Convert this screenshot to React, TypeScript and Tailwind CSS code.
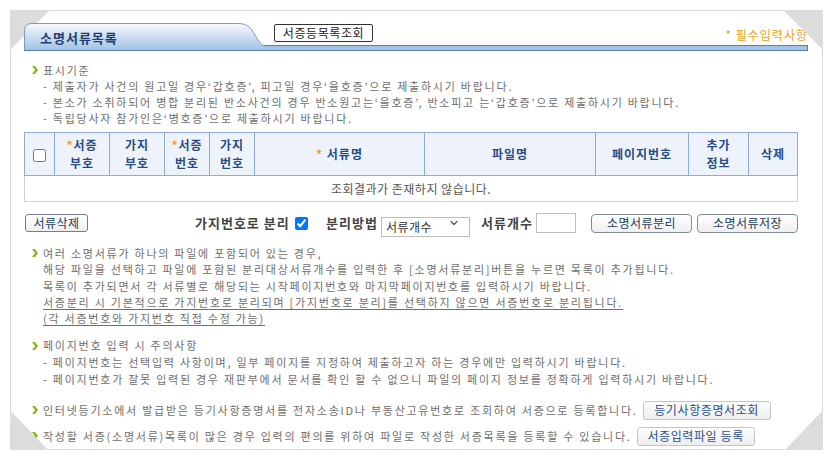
import { ChevronDown } from "lucide-react";

function Bullet() {
  return (
    <svg width="6" height="8" viewBox="0 0 6 8" className="shrink-0">
      <path d="M0 0 L3 0 L6 4 L3 8 L0 8 L3 4 Z" fill="#8bb523" />
    </svg>
  );
}

function Corner({ className, points }: { className: string; points: string }) {
  return (
    <svg width="40" height="40" viewBox="0 0 40 40" className={"absolute " + className}>
      <polygon points={points} fill="#dcdcdc" />
    </svg>
  );
}

const body = "text-[11px] tracking-[1.75px] text-[#6e6e6e]";
const label = "inline-block text-[13px] font-bold tracking-[1px] text-[#444] whitespace-nowrap";
const th = "border border-[#8eabd5] text-[12px] font-bold tracking-[1px] text-[#284b86] leading-[18px] text-center align-middle";
const star = <span className="text-[#f09a2c]">*</span>;
const navBtn = "h-[19px] border border-[#7f8c99] rounded-[4px] bg-gradient-to-b from-white to-[#efefef] text-[12px] tracking-[0.5px] leading-[16px] text-[#233a5c]";
const lightBtn = "ml-[5px] h-[19px] border border-[#c5c5c5] rounded-[3px] bg-gradient-to-b from-[#fdfdfd] to-[#eeeeee] text-[12px] tracking-[0.6px] leading-[16px] text-[#1e4f8f]";

export default function App() {
  return (
    <div className="relative w-[835px] h-[461px] bg-white font-['Noto_Sans_CJK_KR','Noto_Sans',sans-serif]">
      <div className="absolute left-[10px] top-[10px] w-[813px] h-[440px] border border-[#d9d9d9] pl-[13px] pt-[12px]">
        {/* header */}
        <div className="relative flex w-[784px] h-[28px]">
          <div className="absolute left-0 right-0 bottom-0 h-[6px] bg-[#a3c3e6] border border-[#5e80a8]" />
          <div className="relative w-[242px] h-[27px] z-10">
            <svg width="242" height="27" viewBox="0 0 242 27" className="absolute inset-0">
              <defs>
                <linearGradient id="tabg" x1="0" y1="0" x2="0" y2="1">
                  <stop offset="0" stopColor="#f6f9fd" />
                  <stop offset="1" stopColor="#a3c3e6" />
                </linearGradient>
              </defs>
              <path d="M0.5 27 V8 Q0.5 0.5 8 0.5 H214 C224 0.5 227 5 231 12 C235 19 238 23 242 23.5 V27 Z" fill="url(#tabg)" />
              <path d="M0.5 27 V8 Q0.5 0.5 8 0.5 H214 C224 0.5 227 5 231 12 C235 19 238 23 242 23.5" fill="none" stroke="#7a9bc3" />
            </svg>
            <span className="relative block pl-[16px] pt-[7px] leading-[16px] text-[13px] font-bold tracking-[1px] text-[#1f3f73]">
              소명서류목록
            </span>
          </div>
          <button className="relative z-10 ml-[8px] mt-[1px] w-[99px] h-[18px] border border-[#333] rounded-[2px] bg-white text-[12px] tracking-[0.6px] leading-[16px] text-[#222]">
            서증등목록조회
          </button>
          <span className="ml-auto mt-[4px] leading-[16px] text-[12px] tracking-[1px] text-[#e8a317]">* 필수입력사항</span>
        </div>

        {/* 표시기준 */}
        <div className={"mt-[11px] leading-[16px] " + body}>
          <div className="flex items-center">
            <span className="ml-[8px] mr-[5px]"><Bullet /></span>표시기준
          </div>
          <div className="pl-[19px]">- 제출자가 사건의 원고일 경우‘갑호증’, 피고일 경우‘을호증’으로 제출하시기 바랍니다.</div>
          <div className="pl-[19px]">- 본소가 소취하되어 병합 분리된 반소사건의 경우 반소원고는‘을호증’, 반소피고 는‘갑호증’으로 제출하시기 바랍니다.</div>
          <div className="pl-[19px]">- 독립당사자 참가인은‘병호증’으로 제출하시기 바랍니다.</div>
        </div>

        {/* table */}
        <table className="mt-[6px] w-[773px] border-collapse table-fixed">
          <colgroup>
            <col className="w-[30px]" />
            <col className="w-[55px]" />
            <col className="w-[55px]" />
            <col className="w-[45px]" />
            <col className="w-[45px]" />
            <col className="w-[170px]" />
            <col className="w-[171px]" />
            <col className="w-[93px]" />
            <col className="w-[60px]" />
            <col className="w-[49px]" />
          </colgroup>
          <thead>
            <tr className="h-[43px] bg-[#eef3fb]">
              <th className={th}>
                <input type="checkbox" className="w-[13px] h-[13px] align-middle" />
              </th>
              <th className={th}>{star}서증<br />부호</th>
              <th className={th}>가지<br />부호</th>
              <th className={th}>{star}서증<br />번호</th>
              <th className={th}>가지<br />번호</th>
              <th className={th}>{star} 서류명</th>
              <th className={th}>파일명</th>
              <th className={th}>페이지번호</th>
              <th className={th}>추가<br />정보</th>
              <th className={th}>삭제</th>
            </tr>
          </thead>
          <tbody>
            <tr className="h-[26px]">
              <td colSpan={10} className="border border-[#d3d3d3] text-center text-[12px] tracking-[0.5px] text-[#555]">
                조회결과가 존재하지 않습니다.
              </td>
            </tr>
          </tbody>
        </table>

        {/* controls */}
        <div className="mt-[11px] flex items-center h-[20px] w-[774px]">
          <button className={"ml-[1px] w-[63px] !h-[18px] !rounded-[3px] !border-[#6f7f90] " + navBtn}>서류삭제</button>
          <span className={"ml-[107px] w-[96px] " + label}>가지번호로 분리</span>
          <input type="checkbox" defaultChecked className="ml-[4px] w-[13px] h-[13px]" />
          <span className={"ml-[18px] w-[52px] " + label}>분리방법</span>
          <div className="relative ml-[3px] w-[89px] h-[20px]">
            <select className="appearance-none w-full h-full border border-[#bdbdbd] bg-white pl-[4px] text-[12px] tracking-[0.5px] text-[#333] outline-none">
              <option>서류개수</option>
            </select>
            <ChevronDown size={12} strokeWidth={2.5} className="absolute right-[10px] top-[4px] text-[#555] pointer-events-none" />
          </div>
          <span className={"ml-[11px] w-[52px] " + label}>서류개수</span>
          <input type="text" className="ml-[3px] w-[40px] h-[20px] border border-[#bdbdbd] bg-white" />
          <button className={"ml-[15px] w-[101px] " + navBtn}>소명서류분리</button>
          <button className={"ml-[5px] w-[101px] " + navBtn}>소명서류저장</button>
        </div>

        {/* 분리 안내 */}
        <div className={"mt-[12px] leading-[16.25px] " + body}>
          <div className="flex items-center">
            <span className="ml-[8px] mr-[5px]"><Bullet /></span>여러 소명서류가 하나의 파일에 포함되어 있는 경우,
          </div>
          <div className="pl-[19px]">해당 파일을 선택하고 파일에 포함된 분리대상서류개수를 입력한 후 [소명서류분리]버튼을 누르면 목록이 추가됩니다.</div>
          <div className="pl-[19px]">목록이 추가되면서 각 서류별로 해당되는 시작페이지번호와 마지막페이지번호를 입력하시기 바랍니다.</div>
          <div className="pl-[19px]">
            <span className="underline underline-offset-2">서증분리 시 기본적으로 가지번호로 분리되며 [가지번호로 분리]를 선택하지 않으면 서증번호로 분리됩니다.</span>
          </div>
          <div className="pl-[19px]">
            <span className="underline underline-offset-2">(각 서증번호와 가지번호 직접 수정 가능)</span>
          </div>
        </div>

        {/* 페이지번호 */}
        <div className={"mt-[11px] leading-[17px] " + body}>
          <div className="flex items-center">
            <span className="ml-[8px] mr-[5px]"><Bullet /></span>페이지번호 입력 시 주의사항
          </div>
          <div className="pl-[19px]">- 페이지번호는 선택입력 사항이며, 일부 페이지를 지정하여 제출하고자 하는 경우에만 입력하시기 바랍니다.</div>
          <div className="pl-[19px]">- 페이지번호가 잘못 입력된 경우 재판부에서 문서를 확인 할 수 없으니 파일의 페이지 정보를 정확하게 입력하시기 바랍니다.</div>
        </div>

        {/* 등록 */}
        <div className={"mt-[12px] flex items-center h-[20px] whitespace-nowrap " + body}>
          <span className="ml-[8px] mr-[5px]"><Bullet /></span>
          인터넷등기소에서 발급받은 등기사항증명서를 전자소송ID나 부동산고유번호로 조회하여 서증으로 등록합니다.
          <button className={"w-[128px] " + lightBtn}>등기사항증명서조회</button>
        </div>
        <div className={"mt-[6px] flex items-center h-[20px] whitespace-nowrap " + body}>
          <span className="ml-[8px] mr-[5px]"><Bullet /></span>
          작성할 서증(소명서류)목록이 많은 경우 입력의 편의를 위하여 파일로 작성한 서증목록을 등록할 수 있습니다.
          <button className={"w-[118px] " + lightBtn}>서증입력파일 등록</button>
        </div>
      </div>

      <Corner className="left-[10px] top-[10px]" points="0,0 40,0 0,40" />
      <Corner className="left-[783px] top-[10px]" points="0,0 40,0 40,40" />
      <Corner className="left-[10px] top-[410px]" points="0,0 0,40 38,40" />
      <Corner className="left-[783px] top-[410px]" points="40,0 40,40 2,40" />
    </div>
  );
}
